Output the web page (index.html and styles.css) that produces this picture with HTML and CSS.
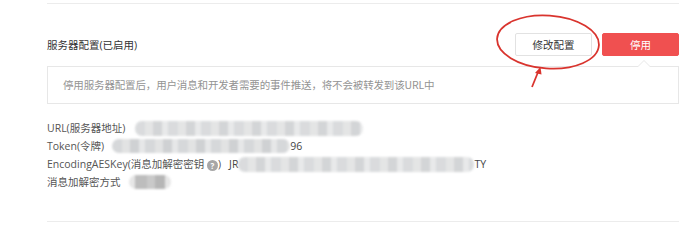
FILE: index.html
```html
<!DOCTYPE html>
<html lang="zh-CN">
<head>
<meta charset="utf-8">
<link rel="stylesheet" href="styles.css">
</head>
<body>
<div class="panel">
  <div class="header">
    <div class="title">服务器配置(已启用)</div>
    <div class="actions">
      <button class="btn btn-default">修改配置</button>
      <button class="btn btn-danger">停用</button>
    </div>
  </div>
  <div class="notice">停用服务器配置后，用户消息和开发者需要的事件推送，将不会被转发到该URL中</div>
  <div class="info">
    <div class="row"><span class="label">URL(服务器地址)</span><span class="blur blur-url"></span></div>
    <div class="row"><span class="label">Token(令牌)</span><span class="blur blur-token"></span><span class="val">96</span></div>
    <div class="row"><span class="label">EncodingAESKey(消息加解密密钥 <span class="q">?</span>)</span><span class="val val-jr">JR</span><span class="blur blur-aes"></span><span class="val">TY</span></div>
    <div class="row"><span class="label">消息加解密方式</span><span class="blur blur-mode"></span></div>
  </div>
  <svg class="annot" width="120" height="90" viewBox="0 0 120 90">
    <ellipse cx="52" cy="33" rx="51" ry="26.5" transform="rotate(4 52 33)" fill="none" stroke="#d9342e" stroke-width="1.8"/>
    <path d="M36 78 L42.5 62" stroke="#d9342e" stroke-width="1.8" fill="none"/>
    <path d="M44.5 58 L39 64 L45.5 65.5 Z" fill="#d9342e"/>
  </svg>
</div>
</body>
</html>
```
FILE: styles.css
```css
html, body {
  margin: 0;
  padding: 0;
  background: #fff;
}
body {
  font-family: "Open Sans", "Noto Sans CJK SC", sans-serif;
  font-size: 10.5px;
  color: #333;
}
.panel {
  position: relative;
  margin: 3px 0 0 47px;
  width: 632px;
  border-top: 1px solid #ececec;
  border-bottom: 1px solid #ececec;
  padding-bottom: 30px;
}
.header {
  display: flex;
  justify-content: space-between;
  align-items: center;
  margin-top: 29px;
  height: 23px;
}
.title {
  font-size: 10.5px;
  color: #333;
}
.actions {
  display: flex;
  gap: 10px;
}
.btn {
  width: 77px;
  height: 23px;
  border-radius: 2px;
  font-family: "Noto Sans CJK SC", sans-serif;
  font-size: 10.5px;
  padding: 0;
  cursor: pointer;
}
.btn-default {
  background: #fff;
  border: 1px solid #e2e2e2;
  color: #333;
}
.btn-danger {
  background: #f05050;
  border: 1px solid #f05050;
  color: #fff;
}
.notice {
  position: relative;
  margin-top: 10px;
  height: 36px;
  line-height: 36px;
  border: 1px solid #e7e7e7;
  padding: 0 15px;
  color: #939393;
  letter-spacing: -0.15px;
  font-family: "Noto Sans CJK SC", sans-serif;
}
.notice::before,
.notice::after {
  content: "";
  position: absolute;
  left: 590px;
  width: 0;
  height: 0;
  border-left: 6px solid transparent;
  border-right: 6px solid transparent;
}
.notice::before {
  top: -7px;
  border-bottom: 6px solid #e7e7e7;
}
.notice::after {
  top: -6px;
  border-bottom: 6px solid #fff;
}
.info {
  margin-top: 15px;
  color: #555;
}
.row {
  display: flex;
  align-items: center;
  height: 18px;
  line-height: 18px;
}
.label {
  color: #555;
}
.q {
  display: inline-block;
  width: 11px;
  height: 11px;
  line-height: 11px;
  border-radius: 50%;
  background: #a7a7a7;
  color: #fff;
  font-size: 8px;
  font-weight: bold;
  text-align: center;
  vertical-align: -1px;
}
.val {
  color: #444;
}
.val-jr {
  margin-left: 8px;
}
.blur {
  display: inline-block;
  height: 14px;
  border-radius: 7px;
  filter: blur(1px);
  background: repeating-linear-gradient(90deg, #d6d8da 0 10px, #e2e3e3 10px 18px, #cfd1d3 18px 27px, #e6e7e8 27px 33px);
}
.blur-url {
  width: 228px;
  margin-left: 10px;
  height: 15px;
  opacity: 0.9;
}
.blur-token {
  width: 178px;
  margin-left: 8px;
}
.blur-aes {
  width: 236px;
  height: 15px;
  opacity: 0.9;
}
.blur-mode {
  width: 42px;
  margin-left: 8px;
  background: linear-gradient(90deg, #e6e6e6 0 6px, #bdbdbd 6px 18px, #c9c9c9 18px 26px, #b6b6b6 26px 36px, #e6e6e6 36px);
}
.annot {
  position: absolute;
  left: 449px;
  top: 5px;
  overflow: visible;
}
```
